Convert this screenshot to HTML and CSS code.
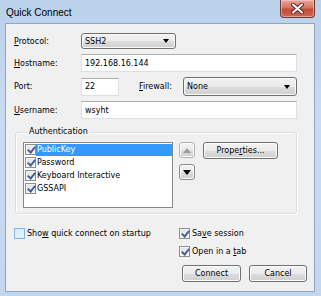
FILE: index.html
```html
<!DOCTYPE html>
<html>
<head>
  <meta charset="UTF-8">
  <title>Quick Connect</title>
  <link rel="stylesheet" href="styles.css">
</head>
<body>

  <div class="window">
    <div class="titlebar">
      <span class="title">Quick Connect</span>
      <button class="close">
        <svg width="13" height="11" viewBox="0 0 13 11">
          <path d="M2 1.5 L11 9.5 M11 1.5 L2 9.5" stroke="#5a2a26" stroke-width="4" stroke-linecap="round"/>
          <path d="M2 1.5 L11 9.5 M11 1.5 L2 9.5" stroke="#fff" stroke-width="2" stroke-linecap="round"/>
        </svg>
      </button>
    </div>

    <div class="panel">
      <div class="form">
        <label class="lbl"><u>P</u>rotocol:</label>
        <div class="select proto"><span>SSH2</span><i class="arrow"></i></div>

        <label class="lbl"><u>H</u>ostname:</label>
        <input class="input" type="text" value="192.168.16.144">

        <label class="lbl">Port:</label>
        <div class="port-row">
          <input class="input port" type="text" value="22">
          <label class="lbl fw"><u>F</u>irewall:</label>
          <div class="select fwsel"><span>None</span><i class="arrow"></i></div>
        </div>

        <label class="lbl"><u>U</u>sername:</label>
        <input class="input" type="text" value="wsyht">
      </div>

      <fieldset class="group">
        <legend>Authentication</legend>
        <div class="auth">
          <ul class="list">
            <li class="item selected"><span class="cb checked"></span><span class="txt">PublicKey</span></li>
            <li class="item"><span class="cb checked"></span><span class="txt">Password</span></li>
            <li class="item"><span class="cb checked"></span><span class="txt">Keyboard Interactive</span></li>
            <li class="item"><span class="cb checked"></span><span class="txt">GSSAPI</span></li>
          </ul>
          <div class="movers">
            <button class="mv up"><i></i></button>
            <button class="mv down"><i></i></button>
          </div>
          <button class="btn props">Prope<u>r</u>ties...</button>
        </div>
      </fieldset>

      <div class="options">
        <div class="opt"><span class="cb hot"></span><span>Sho<u>w</u> quick connect on startup</span></div>
        <div class="opt"><span class="cb checked"></span><span>Sa<u>v</u>e session</span></div>
        <div class="opt"></div>
        <div class="opt"><span class="cb checked"></span><span>Open in a <u>t</u>ab</span></div>
      </div>

      <div class="actions">
        <button class="btn connect">Connect</button>
        <button class="btn cancel">Cancel</button>
      </div>
    </div>
  </div>

</body>
</html>
```

FILE: styles.css
```css
* {
  margin: 0;
  padding: 0;
  box-sizing: border-box;
}

body {
  width: 321px;
  height: 296px;
  overflow: hidden;
  font-family: "DejaVu Sans", sans-serif;
  font-size: 8px;
  color: #000;
  background: #c4d8ee;
}

u {
  text-decoration: underline;
  text-underline-offset: 1px;
}

.window {
  height: 296px;
  display: flex;
  flex-direction: column;
  padding: 0 6px 4px 5px;
  background: linear-gradient(180deg, #b9d1ea 0%, #c8dbf0 40%, #c2d7ee 100%);
}

.titlebar {
  height: 23px;
  display: flex;
  align-items: flex-start;
}
.title {
  font-family: "Liberation Sans", sans-serif;
  font-size: 10px;
  padding: 7px 0 0 1px;
  color: #000;
}
.close {
  margin-left: auto;
  width: 35px;
  height: 18px;
  border: 1px solid #6d3a35;
  border-top: 0;
  border-radius: 0 0 4px 4px;
  background: linear-gradient(180deg, #e6a79b 0%, #d47565 45%, #c34a37 55%, #cf6652 100%);
  box-shadow: inset 0 0 0 1px rgba(255, 220, 210, 0.5);
  display: flex;
  align-items: center;
  justify-content: center;
}

.panel {
  flex: 1;
  background: #f0f0f0;
  border: 1px solid #8fa6c1;
  padding: 9px 7px 0 8px;
  display: flex;
  flex-direction: column;
}

.form {
  display: grid;
  grid-template-columns: 67px 1fr;
  row-gap: 5px;
  align-items: center;
  margin-right: 10px;
}
.lbl {
  white-space: nowrap;
}

.input {
  font: inherit;
  color: #000;
  height: 18px;
  padding: 0 3px;
  background: #fff;
  border: 1px solid #dbdfe6;
  border-top-color: #abadb3;
  outline: 0;
}

.select {
  height: 16px;
  display: flex;
  align-items: center;
  padding: 0 3px;
  border: 1px solid #707070;
  border-radius: 3px;
  background: linear-gradient(180deg, #f2f2f2 0%, #ebebeb 50%, #dddddd 51%, #cfcfcf 100%);
  box-shadow: inset 0 0 0 1px #fbfbfb;
}
.select span {
  flex: 1;
}
.arrow {
  width: 0;
  height: 0;
  margin-right: 3px;
  border-left: 3.5px solid transparent;
  border-right: 3.5px solid transparent;
  border-top: 4px solid #000;
}
.proto {
  width: 95px;
}

.port-row {
  display: flex;
  align-items: center;
}
.port {
  width: 38px;
}
.fw {
  width: 44px;
  margin-left: 20px;
}
.fwsel {
  flex: 1;
  height: 19px;
}

.group {
  margin: 8px 10px 0 1px;
  padding: 5px 7px 5px 7px;
  border: 1px solid #d5dfe5;
  border-radius: 3px;
  box-shadow: inset 1px 1px 0 #fff, 1px 1px 0 #fff;
}
.group legend {
  margin-left: 4px;
  padding: 0 2px;
  line-height: 10px;
}

.auth {
  display: flex;
  align-items: flex-start;
}

.list {
  list-style: none;
  width: 150px;
  height: 66px;
  background: #fff;
  border: 1px solid #828790;
}
.item {
  height: 13px;
  display: flex;
  align-items: center;
  padding-left: 1px;
}
.item .txt {
  flex: 1;
  height: 12px;
  line-height: 12px;
  padding-left: 1px;
  white-space: nowrap;
}
.item.selected .txt {
  background: #3399ff;
  color: #fff;
}

.cb {
  width: 11px;
  height: 11px;
  flex: none;
  border: 1px solid #8e8f8f;
  background: linear-gradient(135deg, #dcdcdc 0%, #fbfbfb 100%);
  box-shadow: inset 0 0 0 1px #f4f4f4;
  position: relative;
}
.cb.checked::after {
  content: "";
  position: absolute;
  left: 3px;
  top: 0px;
  width: 3px;
  height: 6px;
  border: solid #4a5f97;
  border-width: 0 2px 2px 0;
  transform: rotate(40deg);
}
.cb.hot {
  border-color: #7eb4ea;
  background: linear-gradient(135deg, #cfe9fa 0%, #eaf6fd 100%);
  box-shadow: inset 0 0 0 1px #def0fb;
}

.movers {
  margin-left: 6px;
  display: flex;
  flex-direction: column;
  gap: 6px;
}
.mv {
  width: 16px;
  height: 16px;
  border: 1px solid #8a8a8a;
  border-radius: 3px;
  background: linear-gradient(180deg, #f2f2f2 0%, #ebebeb 50%, #dddddd 51%, #cfcfcf 100%);
  box-shadow: inset 0 0 0 1px #fbfbfb;
  display: flex;
  align-items: center;
  justify-content: center;
}
.mv i {
  width: 0;
  height: 0;
  border-left: 4px solid transparent;
  border-right: 4px solid transparent;
}
.mv.up {
  border-color: #adb2b5;
}
.mv.up i {
  border-bottom: 5px solid #9c9c9c;
}
.mv.down i {
  border-top: 5px solid #000;
}

.btn {
  font: inherit;
  color: #000;
  height: 17px;
  border: 1px solid #707070;
  border-radius: 3px;
  background: linear-gradient(180deg, #f2f2f2 0%, #ebebeb 50%, #dddddd 51%, #cfcfcf 100%);
  box-shadow: inset 0 0 0 1px #fbfbfb;
}
.props {
  width: 75px;
  margin-left: 8px;
}

.options {
  display: grid;
  grid-template-columns: 165px 1fr;
  row-gap: 5px;
  margin-top: 13px;
}
.opt {
  height: 13px;
  display: flex;
  align-items: center;
  gap: 2px;
  white-space: nowrap;
}

.actions {
  display: flex;
  justify-content: flex-end;
  gap: 8px;
  margin-top: 7px;
}
.connect {
  width: 59px;
}
.cancel {
  width: 58px;
}
```
